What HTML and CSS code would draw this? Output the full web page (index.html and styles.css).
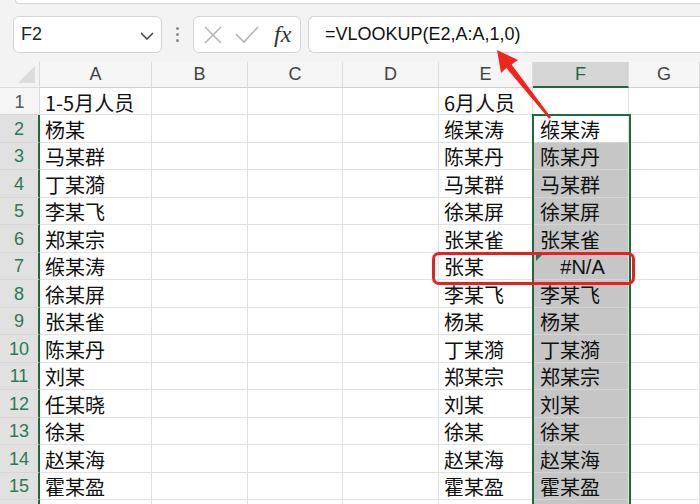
FILE: index.html
```html
<!DOCTYPE html>
<html lang="zh">
<head>
<meta charset="utf-8">
<link rel="stylesheet" href="styles.css">
</head>
<body>
<div class="page">
  <div class="toolbar">
    <div class="ribbon-edge"></div>
    <div class="fbar">
      <div class="namebox">
        <span class="ref">F2</span>
        <svg class="chev" width="14" height="8" viewBox="0 0 14 8"><polyline points="1,1 7,7 13,1" fill="none" stroke="#444" stroke-width="1.5"/></svg>
      </div>
      <div class="dots"><i></i><i></i><i></i></div>
      <div class="fxbox">
        <svg width="20" height="20" viewBox="0 0 20 20"><path d="M2 2 L18 18 M18 2 L2 18" stroke="#b4b4b4" stroke-width="1.6" fill="none"/></svg>
        <svg width="24" height="18" viewBox="0 0 24 18"><polyline points="1,8 9,16 23,1" stroke="#b4b4b4" stroke-width="1.6" fill="none"/></svg>
        <span class="fx">fx</span>
      </div>
      <div class="formula">=VLOOKUP(E2,A:A,1,0)</div>
    </div>
  </div>

  <div class="sheet">
    <div class="grid">
      <div class="corner"><span class="tri"></span></div>
      <div class="ch">A</div><div class="ch">B</div><div class="ch">C</div><div class="ch">D</div><div class="ch">E</div><div class="ch sel">F</div><div class="ch">G</div>

      <div class="rh">1</div><div class="c">1-5月人员</div><div class="c"></div><div class="c"></div><div class="c"></div><div class="c">6月人员</div><div class="c"></div><div class="c"></div>
      <div class="rh s">2</div><div class="c">杨某</div><div class="c"></div><div class="c"></div><div class="c"></div><div class="c">缑某涛</div><div class="c f act">缑某涛</div><div class="c"></div>
      <div class="rh s">3</div><div class="c">马某群</div><div class="c"></div><div class="c"></div><div class="c"></div><div class="c">陈某丹</div><div class="c f">陈某丹</div><div class="c"></div>
      <div class="rh s">4</div><div class="c">丁某漪</div><div class="c"></div><div class="c"></div><div class="c"></div><div class="c">马某群</div><div class="c f">马某群</div><div class="c"></div>
      <div class="rh s">5</div><div class="c">李某飞</div><div class="c"></div><div class="c"></div><div class="c"></div><div class="c">徐某屏</div><div class="c f">徐某屏</div><div class="c"></div>
      <div class="rh s">6</div><div class="c">郑某宗</div><div class="c"></div><div class="c"></div><div class="c"></div><div class="c">张某雀</div><div class="c f">张某雀</div><div class="c"></div>
      <div class="rh s">7</div><div class="c">缑某涛</div><div class="c"></div><div class="c"></div><div class="c"></div><div class="c">张某</div><div class="c f err"><span class="etri"></span>#N/A</div><div class="c"></div>
      <div class="rh s">8</div><div class="c">徐某屏</div><div class="c"></div><div class="c"></div><div class="c"></div><div class="c">李某飞</div><div class="c f">李某飞</div><div class="c"></div>
      <div class="rh s">9</div><div class="c">张某雀</div><div class="c"></div><div class="c"></div><div class="c"></div><div class="c">杨某</div><div class="c f">杨某</div><div class="c"></div>
      <div class="rh s">10</div><div class="c">陈某丹</div><div class="c"></div><div class="c"></div><div class="c"></div><div class="c">丁某漪</div><div class="c f">丁某漪</div><div class="c"></div>
      <div class="rh s">11</div><div class="c">刘某</div><div class="c"></div><div class="c"></div><div class="c"></div><div class="c">郑某宗</div><div class="c f">郑某宗</div><div class="c"></div>
      <div class="rh s">12</div><div class="c">任某晓</div><div class="c"></div><div class="c"></div><div class="c"></div><div class="c">刘某</div><div class="c f">刘某</div><div class="c"></div>
      <div class="rh s">13</div><div class="c">徐某</div><div class="c"></div><div class="c"></div><div class="c"></div><div class="c">徐某</div><div class="c f">徐某</div><div class="c"></div>
      <div class="rh s">14</div><div class="c">赵某海</div><div class="c"></div><div class="c"></div><div class="c"></div><div class="c">赵某海</div><div class="c f">赵某海</div><div class="c"></div>
      <div class="rh s">15</div><div class="c">霍某盈</div><div class="c"></div><div class="c"></div><div class="c"></div><div class="c">霍某盈</div><div class="c f">霍某盈</div><div class="c"></div>
      <div class="rh s"></div><div class="c"></div><div class="c"></div><div class="c"></div><div class="c"></div><div class="c"></div><div class="c f"></div><div class="c"></div>
    </div>
    <div class="selbox"></div>
    <div class="redbox"></div>
  </div>

  <svg class="arrow" width="700" height="504" viewBox="0 0 700 504">
    <polygon points="497,50 518,60 511.6,64.4 551,117.2 549,118.8 506.4,68 501,73" fill="#f0261c"/>
  </svg>
</div>
</body>
</html>
```

FILE: styles.css
```css
html, body {
  margin: 0;
  padding: 0;
  background: #ffffff;
}
.page {
  position: relative;
  width: 700px;
  height: 504px;
  overflow: hidden;
  font-family: "Noto Sans CJK SC", "Noto Sans", sans-serif;
}
.toolbar {
  height: 62px;
  background: #f3f3f3;
  box-sizing: border-box;
}
.ribbon-edge {
  margin-left: 15px;
  height: 3px;
  background: #ffffff;
  border-left: 1px solid #d6d6d6;
  border-bottom: 1px solid #d6d6d6;
  border-bottom-left-radius: 4px;
}
.fbar {
  display: flex;
  align-items: stretch;
  height: 37px;
  margin-top: 12px;
  padding-left: 13px;
}
.namebox {
  width: 149px;
  box-sizing: border-box;
  background: #fff;
  border: 1px solid #d4d4d4;
  border-radius: 6px;
  display: flex;
  align-items: center;
  justify-content: space-between;
  padding: 0 7px 0 7px;
}
.ref {
  font-family: "Liberation Sans", Arial, sans-serif;
  font-size: 18px;
  color: #222;
}
.chev { margin-top: 2px; }
.dots {
  width: 31px;
  display: flex;
  flex-direction: column;
  align-items: center;
  justify-content: center;
  gap: 3px;
}
.dots i {
  display: block;
  width: 3px;
  height: 3px;
  border-radius: 50%;
  background: #8a8a8a;
}
.fxbox {
  width: 108px;
  box-sizing: border-box;
  background: #fff;
  border: 1px solid #d4d4d4;
  border-radius: 6px;
  display: flex;
  align-items: center;
  padding-left: 9px;
  gap: 12px;
}
.fx {
  font-family: "Liberation Serif", "Times New Roman", serif;
  font-style: italic;
  font-size: 24px;
  color: #333;
  margin-left: 3px;
}
.formula {
  flex: 1;
  margin-left: 7px;
  background: #fff;
  border: 1px solid #d4d4d4;
  border-right: none;
  border-radius: 6px 0 0 6px;
  display: flex;
  align-items: center;
  padding-left: 16px;
  font-family: "Liberation Sans", Arial, sans-serif;
  font-size: 18px;
  color: #111;
}
.sheet {
  position: relative;
}
.grid {
  display: grid;
  grid-template-columns: 40px 112px 96px 95px 96px 94px 96px 71px;
  grid-template-rows: 26px 27px repeat(15, 27.5px);
  background: #fff;
}
.corner {
  background: #f3f3f3;
  border-right: 1px solid #dcdcdc;
  border-bottom: 1px solid #dcdcdc;
  position: relative;
  box-sizing: border-box;
}
.tri {
  position: absolute;
  right: 4px;
  bottom: 4px;
  width: 0;
  height: 0;
  border-left: 17px solid transparent;
  border-bottom: 17px solid #dcdcdc;
}
.ch {
  background: #f5f5f5;
  border-right: 1px solid #dcdcdc;
  border-bottom: 1px solid #d0d0d0;
  box-sizing: border-box;
  display: flex;
  align-items: center;
  justify-content: center;
  font-family: "Liberation Sans", Arial, sans-serif;
  font-size: 18px;
  color: #444;
}
.ch.sel {
  background: #d6d6d6;
  color: #1d6b44;
  border-bottom: 2px solid #1d6b3a;
}
.rh {
  background: #f5f5f5;
  border-right: 1px solid #dcdcdc;
  border-bottom: 1px solid #d6d6d6;
  box-sizing: border-box;
  display: flex;
  align-items: center;
  justify-content: center;
  padding-top: 2px;
  font-family: "Liberation Sans", Arial, sans-serif;
  font-size: 18px;
  color: #555;
}
.rh.s {
  background: #e1e1e1;
  color: #2a7a55;
  border-right: 2px solid #1d6b3a;
}
.c {
  border-right: 1px solid #e1e1e1;
  border-bottom: 1px solid #e1e1e1;
  box-sizing: border-box;
  display: flex;
  align-items: center;
  padding-left: 5px;
  padding-top: 3px;
  font-size: 20px;
  line-height: 24px;
  color: #111;
  white-space: nowrap;
}
.c.f {
  background: #c6c6c6;
  border-bottom: 1px solid #d4d4d4;
  padding-left: 7px;
}
.c.f.act {
  background: #fff;
}
.c.err {
  position: relative;
  justify-content: center;
  font-family: "Liberation Sans", Arial, sans-serif;
  font-size: 20px;
  padding-left: 4px;
}
.etri {
  position: absolute;
  left: 3px;
  top: 1px;
  width: 0;
  height: 0;
  border-top: 7px solid #1e7b45;
  border-right: 7px solid transparent;
}
.selbox {
  position: absolute;
  left: 532px;
  top: 52px;
  width: 99px;
  height: 400px;
  box-sizing: border-box;
  border: 2px solid #1d6b3a;
  pointer-events: none;
}
.redbox {
  position: absolute;
  left: 432px;
  top: 190px;
  width: 203px;
  height: 33px;
  box-sizing: border-box;
  border: 3px solid #ec1f1f;
  border-radius: 7px;
  pointer-events: none;
}
.arrow {
  position: absolute;
  left: 0;
  top: 0;
  pointer-events: none;
}
```
